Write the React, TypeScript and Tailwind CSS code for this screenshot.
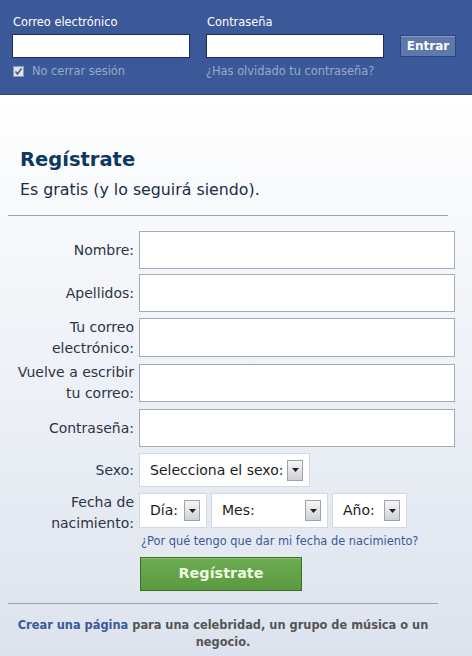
import React from 'react';

const labelCls = "w-[131px] shrink-0 text-right text-[14px] leading-[21px] text-[#2b3447] pr-[5px]";

const Arrow: React.FC = () => (
    <span className="flex h-[21px] w-[16px] items-center justify-center border border-[#9da3ab] bg-gradient-to-b from-[#f6f6f6] to-[#cfd1d4]">
        <svg width="7" height="4" viewBox="0 0 7 4">
            <path d="M0 0h7L3.5 4z" fill="#222" />
        </svg>
    </span>
);

const FakeSelect: React.FC<{ text: string; width: string }> = ({ text, width }) => (
    <div className={`flex h-[35px] items-center justify-between border border-[#d3d9e3] bg-white pl-[10px] pr-[6px] text-[14px] text-[#1c1c1c] ${width}`}>
        <span>{text}</span>
        <Arrow />
    </div>
);

const Row: React.FC<{ label: React.ReactNode; cls: string }> = ({ label, cls }) => (
    <div className={`flex items-center ${cls}`}>
        <div className={labelCls}>{label}</div>
        <div className="h-full w-[316px] border border-[#a3abb8] bg-white" />
    </div>
);

const App: React.FC = () => {
    return (
        <div className="w-[472px] h-[656px] overflow-hidden font-['DejaVu_Sans',sans-serif]">
            {/* Header */}
            <div className="h-[95px] bg-[#3b5998] border-b border-[#34497a] px-[12px] pt-[15px]">
                <div className="grid grid-cols-[178px_178px_56px] gap-x-[16px]">
                    <div className="text-[11.4px] leading-[14px] text-white pl-[1px]">Correo electrónico</div>
                    <div className="text-[11.4px] leading-[14px] text-white pl-[1px]">Contraseña</div>
                    <div />
                    <div className="mt-[5px] h-[24px] border border-[#1d2a5b] bg-white" />
                    <div className="mt-[5px] h-[24px] border border-[#1d2a5b] bg-white" />
                    <button className="mt-[6px] h-[22px] border border-[#29447e] bg-[#5f78ab] shadow-[inset_0_1px_0_#8a9cc2] text-[12px] font-bold text-white">
                        Entrar
                    </button>
                    <div className="mt-[6px] flex items-center gap-[8px] pl-[1px]">
                        <span className="flex h-[11px] w-[11px] items-center justify-center border border-[#8d9bb9] bg-[#dfe3ea]">
                            <svg width="9" height="9" viewBox="0 0 9 9">
                                <path d="M1.5 4.5l2 2.5 4-5.5" stroke="#4b5d85" strokeWidth="1.6" fill="none" />
                            </svg>
                        </span>
                        <span className="text-[11.4px] leading-[14px] text-[#98a9ca]">No cerrar sesión</span>
                    </div>
                    <div className="mt-[6px] text-[11.4px] leading-[14px] text-[#98a9ca]">¿Has olvidado tu contraseña?</div>
                </div>
            </div>

            {/* Sign up */}
            <div className="h-[561px] bg-gradient-to-b from-white to-[#dde3ee] px-[8px] pt-[53px]">
                <h1 className="pl-[12px] text-[19.5px] leading-[24px] font-bold text-[#0e385f]">Regístrate</h1>
                <p className="mt-[8px] pl-[12px] text-[15.8px] leading-[20px] text-[#1c2a47]">Es gratis (y lo seguirá siendo).</p>
                <div className="mt-[15px] mr-[16px] border-t border-[#9aa3b3]" />

                <div className="mt-[15px] flex flex-col">
                    <Row label="Nombre:" cls="h-[38px]" />
                    <Row label="Apellidos:" cls="h-[38px] mt-[5px]" />
                    <Row label={<>Tu correo<br />electrónico:</>} cls="h-[39px] mt-[6px]" />
                    <Row label={<>Vuelve a escribir<br />tu correo:</>} cls="h-[38px] mt-[7px]" />
                    <Row label="Contraseña:" cls="h-[38px] mt-[7px]" />

                    <div className="mt-[6px] flex h-[34px] items-center">
                        <div className={labelCls}>Sexo:</div>
                        <div className="flex h-[34px] w-[171px] items-center justify-between border border-[#d3d9e3] bg-white pl-[10px] pr-[6px] text-[14px] text-[#1c1c1c]">
                            <span>Selecciona el sexo:</span>
                            <Arrow />
                        </div>
                    </div>

                    <div className="mt-[6px] flex h-[35px] items-center">
                        <div className={`${labelCls} translate-y-[2px]`}>Fecha de<br />nacimiento:</div>
                        <div className="flex gap-[4px]">
                            <FakeSelect text="Día:" width="w-[68px]" />
                            <FakeSelect text="Mes:" width="w-[117px]" />
                            <FakeSelect text="Año:" width="w-[75px]" />
                        </div>
                    </div>
                </div>

                <div className="ml-[133px] mt-[6px] text-[11.4px] leading-[14px] text-[#3b5998]">
                    ¿Por qué tengo que dar mi fecha de nacimiento?
                </div>

                <button className="ml-[132px] mt-[9px] h-[34px] w-[162px] border border-[#3b6e22] bg-gradient-to-b from-[#6cab50] to-[#5c9a41] shadow-[inset_0_1px_0_#8fc46f] text-[14.4px] font-bold text-[#eefbe0]">
                    Regístrate
                </button>

                <div className="mt-[12px] w-[430px] border-t border-[#9aa3b3]" />

                <p className="mt-[13px] w-[430px] text-center text-[11.4px] leading-[17px] font-bold text-[#555]">
                    <span className="text-[#3b5998]">Crear una página</span> para una celebridad, un grupo de música o un negocio.
                </p>
            </div>
        </div>
    );
};

export default App;
